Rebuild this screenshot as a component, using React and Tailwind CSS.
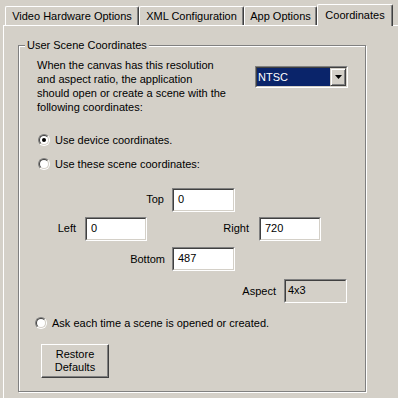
const tabs = [
  { label: "Video Hardware Options", width: "w-[134px]" },
  { label: "XML Configuration", width: "w-[105px]" },
  { label: "App Options", width: "w-[73px]" },
];

function Radio({ checked }) {
  return (
    <span className="flex h-[12px] w-[12px] shrink-0 rounded-full border border-t-[#808080] border-l-[#808080] border-r-white border-b-white">
      <span className="flex h-full w-full items-center justify-center rounded-full border border-t-[#404040] border-l-[#404040] border-r-[#d4d0c8] border-b-[#d4d0c8] bg-white">
        {checked ? <span className="h-[4px] w-[4px] rounded-full bg-black" /> : null}
      </span>
    </span>
  );
}

function Edit({ value, width = "w-[63px]", disabled = false }) {
  return (
    <div
      className={`h-[24px] shrink-0 border border-t-[#808080] border-l-[#808080] border-r-white border-b-white ${width}`}
    >
      <div
        className={`flex h-full items-center border border-t-[#404040] border-l-[#404040] border-r-[#d4d0c8] border-b-[#d4d0c8] pb-[2px] ${
          disabled ? "bg-[#d4d0c8] pl-[2px]" : "bg-white pl-[4px]"
        }`}
      >
        {value}
      </div>
    </div>
  );
}

function Combo() {
  return (
    <div className="mt-[8px] h-[22px] w-[93px] shrink-0 border border-t-[#808080] border-l-[#808080] border-r-white border-b-white">
      <div className="flex h-full border border-t-[#404040] border-l-[#404040] border-r-[#d4d0c8] border-b-[#d4d0c8] bg-white">
        <div className="flex flex-1 items-center bg-[#0a246a] pl-[1px] pb-[1px] text-white">NTSC</div>
        <div className="flex w-[16px] items-center justify-center border border-t-[#d4d0c8] border-l-[#d4d0c8] border-r-[#404040] border-b-[#404040] bg-[#d4d0c8] shadow-[inset_1px_1px_0_#fff,inset_-1px_-1px_0_#808080]">
          <svg width="7" height="4" viewBox="0 0 7 4">
            <path d="M0 0h7L3.5 4z" fill="#000" />
          </svg>
        </div>
      </div>
    </div>
  );
}

export default function App() {
  return (
    <div className="h-[398px] w-[398px] overflow-hidden bg-[#d4d0c8] font-['Liberation_Sans',Arial,sans-serif] text-[11px] leading-[14px] text-black">
      {/* Tabs */}
      <div className="flex h-[25px] items-end pl-[5px]">
        {tabs.map((tab) => (
          <div
            key={tab.label}
            className={`flex h-[19px] items-center justify-center rounded-t-[2px] border-t border-l border-r border-t-white border-l-white border-r-[#404040] pb-[1px] shadow-[inset_-1px_0_0_#808080] ${tab.width}`}
          >
            {tab.label}
          </div>
        ))}
        <div className="relative z-10 -mb-px flex h-[22px] w-[76px] items-start justify-center rounded-t-[2px] border-t border-l border-r border-t-white border-l-white border-r-[#404040] bg-[#d4d0c8] pt-[3px] shadow-[inset_-1px_0_0_#808080]">
          Coordinates
        </div>
      </div>

      {/* Page */}
      <div className="ml-[3px] h-[380px] border-t border-l border-white pl-[14px] pt-[19px]">
        <div className="relative h-[347px] w-[348px] border border-[#808080] pt-[12px] shadow-[inset_1px_1px_0_#fff,1px_1px_0_#fff]">
          <span className="absolute -top-[8px] left-[6px] bg-[#d4d0c8] px-[2px]">User Scene Coordinates</span>

          <div className="flex">
            <p className="ml-[18px] w-[218px] shrink-0">
              When the canvas has this resolution
              <br />
              and aspect ratio, the application
              <br />
              should open or create a scene with the
              <br />
              following coordinates:
            </p>
            <Combo />
          </div>

          <div className="mt-[19px] flex h-[14px] items-center gap-[5px] pl-[19px]">
            <Radio checked />
            <span className="pb-[1px]">Use device coordinates.</span>
          </div>
          <div className="mt-[10px] flex h-[14px] items-center gap-[5px] pl-[19px]">
            <Radio />
            <span className="pb-[1px]">Use these scene coordinates:</span>
          </div>

          <div className="mt-[17px] flex items-center">
            <span className="w-[145px] pb-[2px] text-right">Top</span>
            <div className="ml-[8px]">
              <Edit value="0" />
            </div>
          </div>

          <div className="mt-[5px] flex items-center">
            <span className="w-[57px] pb-[2px] text-right">Left</span>
            <div className="ml-[9px]">
              <Edit value="0" width="w-[62px]" />
            </div>
            <span className="w-[102px] pb-[2px] text-right">Right</span>
            <div className="ml-[10px]">
              <Edit value="720" width="w-[62px]" />
            </div>
          </div>

          <div className="mt-[6px] flex items-center">
            <span className="w-[146px] text-right">Bottom</span>
            <div className="ml-[7px]">
              <Edit value="487" />
            </div>
          </div>

          <div className="mt-[8px] flex items-center">
            <span className="w-[257px] text-right">Aspect</span>
            <div className="ml-[8px]">
              <Edit value="4x3" disabled />
            </div>
          </div>

          <div className="mt-[13px] flex h-[14px] items-center gap-[5px] pl-[16px]">
            <Radio />
            <span className="pb-[1px]">Ask each time a scene is opened or created.</span>
          </div>

          <div className="ml-[22px] mt-[14px] flex h-[34px] w-[68px] flex-col items-center justify-center border border-t-white border-l-white border-r-[#404040] border-b-[#404040] pb-[1px] leading-[13px] shadow-[inset_-1px_-1px_0_#808080]">
            <span>Restore</span>
            <span>Defaults</span>
          </div>
        </div>
      </div>
    </div>
  );
}
